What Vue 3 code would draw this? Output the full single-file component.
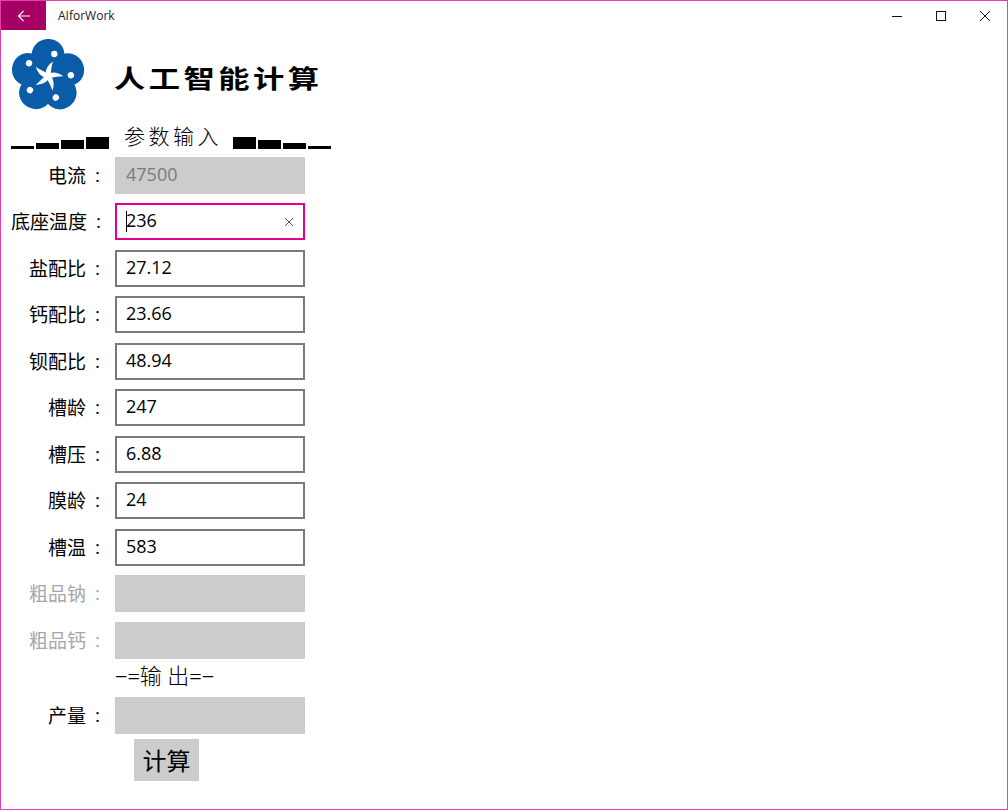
<script setup>
import { ref } from 'vue'

const topRows = ref([
  { label: '电流', value: '47500', disabled: true },
  { label: '底座温度', value: '236', focused: true },
  { label: '盐配比', value: '27.12' },
  { label: '钙配比', value: '23.66' },
  { label: '钡配比', value: '48.94' },
  { label: '槽龄', value: '247' },
  { label: '槽压', value: '6.88' },
  { label: '膜龄', value: '24' },
  { label: '槽温', value: '583' },
  { label: '粗品钠', value: '', disabled: true, dim: true },
  { label: '粗品钙', value: '', disabled: true, dim: true },
])
const output = ref('')
const leftBars = [3, 6, 9, 12]
const rightBars = [12, 9, 6, 3]
const petals = [0, 72, 144, 216, 288]
</script>

<template>
  <div class="window">
    <div class="titlebar">
      <button class="back" aria-label="back">
        <svg width="14" height="14" viewBox="0 0 14 14" fill="none" stroke="#fff" stroke-width="1.1">
          <path d="M1.5 7H13M6.5 2 1.5 7l5 5" />
        </svg>
      </button>
      <span class="app-name">AIforWork</span>
      <div class="controls">
        <span class="ctl">
          <svg width="12" height="12" viewBox="0 0 12 12" fill="none" stroke="#111"><path d="M1 6.5h10" /></svg>
        </span>
        <span class="ctl">
          <svg width="12" height="12" viewBox="0 0 12 12" fill="none" stroke="#111"><rect x="1.5" y="1.5" width="9" height="9" /></svg>
        </span>
        <span class="ctl">
          <svg width="12" height="12" viewBox="0 0 12 12" fill="none" stroke="#111"><path d="M1 1l10 10M11 1 1 11" /></svg>
        </span>
      </div>
    </div>

    <div class="content">
      <header class="head">
        <svg class="logo" width="75" height="72" viewBox="-37 -37 75 72">
          <g v-for="a in petals" :key="a" :transform="`rotate(${a})`">
            <path fill="#0b5ca8" d="M0 1C-10-3-17-10-16.500-21C-16-31-8-37.500 1-37C12-36.500 18-27 16-18.500C14-11 7-6 0 1Z" />
            <circle cx="6.300" cy="-22" r="3.200" fill="#fff" />
          </g>
          <circle r="6" fill="#0b5ca8" />
          <g v-for="a in petals" :key="'b' + a" :transform="`rotate(${a})`">
            <path fill="#fff" d="M-1.500 1C-3.500-4-1.500-10 5-14.500C3.500-10 3-6 2.500 0Z" />
          </g>
        </svg>
        <h1 class="title">人工智能计算</h1>
      </header>

      <div class="section">
        <div class="bars">
          <i v-for="(h, i) in leftBars" :key="i" :style="{ height: h + 'px' }"></i>
        </div>
        <span class="section-text">参数输入</span>
        <div class="bars">
          <i v-for="(h, i) in rightBars" :key="i" :style="{ height: h + 'px' }"></i>
        </div>
      </div>

      <div class="form">
        <div v-for="row in topRows" :key="row.label" class="row">
          <label class="label" :class="{ dim: row.dim }">{{ row.label }}<span class="colon">:</span></label>
          <div class="field" :class="{ focused: row.focused }">
            <input v-model="row.value" :disabled="row.disabled" />
            <template v-if="row.focused">
              <span class="caret"></span>
              <svg class="clear" width="10" height="10" viewBox="0 0 10 10" fill="none" stroke="#555">
                <path d="M1 1l8 8M9 1 1 9" />
              </svg>
            </template>
          </div>
        </div>

        <div class="row output-head">
          <span></span>
          <span class="output-text">−=输 出=−</span>
        </div>

        <div class="row">
          <label class="label">产量<span class="colon">:</span></label>
          <div class="field">
            <input v-model="output" disabled />
          </div>
        </div>

        <button class="calc">计算</button>
      </div>
    </div>
  </div>
</template>

<style scoped>
.window {
  box-sizing: border-box;
  width: 1008px;
  height: 810px;
  border: 1px solid #e83fae;
  background: #fff;
  color: #000;
  font-family: "Open Sans", "Noto Sans CJK SC", sans-serif;
  overflow: hidden;
}
.titlebar {
  display: flex;
  align-items: center;
  height: 29px;
}
.back {
  display: flex;
  align-items: center;
  justify-content: center;
  width: 45px;
  height: 29px;
  border: 0;
  padding: 0;
  background: #a50064;
}
.app-name {
  margin-left: 12px;
  font-size: 12px;
  color: #222;
}
.controls {
  display: flex;
  margin-left: auto;
}
.ctl {
  display: flex;
  align-items: center;
  justify-content: center;
  width: 44px;
  height: 29px;
}
.content {
  padding-left: 10px;
}
.head {
  display: flex;
  align-items: center;
  padding-top: 9px;
  height: 72px;
}
.logo {
  display: block;
}
.title {
  margin: 6px 0 0 28px;
  font-size: 25px;
  font-weight: 700;
  letter-spacing: 2.8px;
  line-height: 1;
  white-space: nowrap;
  transform: scaleX(1.25);
  transform-origin: left center;
}
.section {
  display: flex;
  align-items: flex-end;
  width: 320px;
  height: 38px;
}
.bars {
  display: flex;
  align-items: flex-end;
  gap: 2px;
}
.bars i {
  display: block;
  width: 23px;
  background: #000;
}
.section-text {
  margin: 0 6px 0 15px;
  width: 104px;
  font-size: 21px;
  font-weight: 300;
  letter-spacing: 3.500px;
  line-height: 26px;
  white-space: nowrap;
}
.form {
  display: flex;
  flex-direction: column;
  gap: 9.5px;
  padding-top: 7.75px;
}
.row {
  display: flex;
  align-items: center;
}
.label {
  display: flex;
  justify-content: flex-end;
  align-items: center;
  width: 92px;
  margin-right: 12px;
  padding-bottom: 1px;
  font-size: 19px;
  white-space: nowrap;
}
.label.dim {
  color: #a6a6a6;
}
.colon {
  margin-left: 9px;
  width: 8px;
}
.field {
  position: relative;
  width: 190px;
  height: 37px;
}
.field input {
  box-sizing: border-box;
  display: block;
  width: 100%;
  height: 100%;
  padding: 0 10px 3px 9px;
  border: 2px solid #7a7a7a;
  border-radius: 0;
  outline: none;
  background: #fff;
  color: #000;
  font-family: inherit;
  font-size: 18px;
}
.field input:disabled {
  border-color: #ccc;
  background: #ccc;
  color: #7a7a7a;
}
.field.focused input {
  border-color: #e3008c;
}
.caret {
  position: absolute;
  left: 11px;
  top: 8px;
  width: 1px;
  height: 21px;
  background: #000;
}
.clear {
  position: absolute;
  right: 11px;
  top: 14px;
}
.output-head {
  height: 19px;
}
.output-head > span:first-child {
  width: 104px;
}
.output-text {
  margin-top: -2px;
  font-family: "Liberation Serif", "Noto Sans CJK SC", serif;
  font-size: 22px;
  font-weight: 300;
  line-height: 19px;
  white-space: nowrap;
}
.calc {
  width: 65px;
  height: 42px;
  margin: -4.5px 0 0 123px;
  padding: 0;
  border: 0;
  background: #ccc;
  color: #000;
  font-family: inherit;
  font-size: 24px;
}
</style>

<style>
html,
body {
  margin: 0;
  background: #fff;
}
</style>
